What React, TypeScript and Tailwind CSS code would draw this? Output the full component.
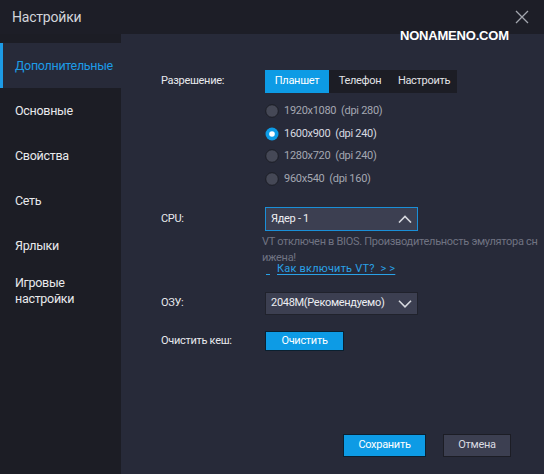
import { useState } from 'react';

const navItems = ['Дополнительные', 'Основные', 'Свойства', 'Сеть', 'Ярлыки', 'Игровые\nнастройки'];

const resolutions = [
  { res: '1920x1080', dpi: '(dpi 280)' },
  { res: '1600x900', dpi: '(dpi 240)' },
  { res: '1280x720', dpi: '(dpi 240)' },
  { res: '960x540', dpi: '(dpi 160)' },
];

const tabs = ['Планшет', 'Телефон', 'Настроить'];

function Chevron({ up }: { up?: boolean }) {
  return (
    <svg width="14" height="8" viewBox="0 0 14 8" fill="none" stroke="#d6d8de" strokeWidth="1.6">
      {up ? <path d="M1 7.5 L7 1.5 L13 7.5" /> : <path d="M1 0.8 L7 6.8 L13 0.8" />}
    </svg>
  );
}

function Radio({ on }: { on: boolean }) {
  return (
    <svg width="14" height="14" viewBox="0 0 14 14" className="shrink-0">
      {on ? (
        <>
          <circle cx="7" cy="7" r="6.5" fill="#0d9be5" />
          <circle cx="7" cy="7" r="2.8" fill="#ffffff" />
        </>
      ) : (
        <circle cx="7" cy="7" r="6.3" fill="#454856" stroke="#1b1d25" strokeWidth="1" />
      )}
    </svg>
  );
}

export default function App() {
  const [active, setActive] = useState(0);
  const [tab, setTab] = useState(0);
  const [res, setRes] = useState(1);

  return (
    <div
      className="relative w-[544px] h-[474px] flex flex-col bg-[#272a39] text-[#e8e9ed] overflow-hidden"
      style={{ fontFamily: 'Roboto, "Noto Sans", sans-serif' }}
    >
      {/* header */}
      <div className="h-[34px] shrink-0 flex items-center justify-between bg-[#1d1e27] pl-[12px] pr-[15px]">
        <span className="text-[14px] tracking-[-0.2px] text-[#d2d4da]">Настройки</span>
        <svg width="14" height="14" viewBox="0 0 14 14" stroke="#a3a6ae" strokeWidth="1.3">
          <path d="M1 1 L13 13 M13 1 L1 13" />
        </svg>
      </div>
      <div
        className="absolute left-[400px] top-[26px] text-[13px] font-bold text-white tracking-[-0.2px]"
        style={{ fontFamily: '"Liberation Sans", Arial, sans-serif' }}
      >
        NONAMENO.COM
      </div>

      <div className="flex flex-1 min-h-0">
        {/* sidebar */}
        <div className="w-[121px] shrink-0 bg-[#1c1d25] pt-[9px]">
          {navItems.map((n, i) => (
            <button
              key={n}
              onClick={() => setActive(i)}
              className={`w-full h-[45px] flex items-center text-left pl-[12px] text-[12.5px] tracking-[-0.3px] leading-[16px] whitespace-pre-line border-l-[3px] ${
                active === i ? 'bg-[#272a39] border-[#1d9be6] text-[#1d9be6]' : 'border-transparent text-[#e8e9ec]'
              }`}
            >
              {n}
            </button>
          ))}
        </div>

        {/* main */}
        <div className="flex-1 min-w-0 overflow-hidden flex flex-col pl-[40px] text-[11px] tracking-[-0.3px]">
          <div className="flex items-center mt-[36px]">
            <span className="w-[104px] shrink-0">Разрешение:</span>
            <div className="flex h-[23px] bg-[#1c1d25]">
              {tabs.map((t, i) => (
                <button
                  key={t}
                  onClick={() => setTab(i)}
                  className={`h-full flex items-center justify-center ${
                    i === 0 ? 'w-[64px]' : i === 1 ? 'w-[62px]' : 'w-[66px]'
                  } ${tab === i ? 'bg-[#0d9be5] text-white' : 'text-[#e2e3e7]'}`}
                >
                  {t}
                </button>
              ))}
            </div>
          </div>

          <div className="ml-[104px] mt-[7px] flex flex-col">
            {resolutions.map((r, i) => (
              <button key={r.res} onClick={() => setRes(i)} className="h-[22.5px] flex items-center gap-[5px] text-left">
                <Radio on={res === i} />
                <span className={res === i ? 'text-[#d8dae0]' : 'text-[#a4a7b1]'}>
                  {r.res}&nbsp;&nbsp;{r.dpi}
                </span>
              </button>
            ))}
          </div>

          <div className="flex items-center mt-[17px]">
            <span className="w-[104px] shrink-0">CPU:</span>
            <div className="w-[153px] h-[24px] flex items-center justify-between bg-[#3c3f51] border border-[#1a8fd8] pl-[5px] pr-[5px]">
              <span className="text-[#eceef2]">Ядер - 1</span>
              <Chevron up />
            </div>
          </div>
          <div className="ml-[101px] mt-[3px] leading-[16px] text-[#707382] whitespace-nowrap">
            <div>VT отключен в BIOS. Производительность эмулятора сн</div>
            <div>ижена!</div>
          </div>
          <div className="ml-[104px] mt-[-3px] leading-[12px] flex items-end">
            <span className="w-[4px] h-[1px] bg-[#2aa1e6] ml-[1px]" />
            <span className="ml-[3px] text-[#2aa1e6] underline underline-offset-2 pl-[4px] pr-[3px] tracking-[0.2px]">
              Как включить VT?&nbsp; &gt; &gt;
            </span>
          </div>

          <div className="flex items-center mt-[17px]">
            <span className="w-[104px] shrink-0">ОЗУ:</span>
            <div className="w-[153px] h-[23px] flex items-center justify-between bg-[#3c3f51] border border-[#20222c] pl-[5px] pr-[5px]">
              <span className="text-[#eceef2]">2048M(Рекомендуемо)</span>
              <Chevron />
            </div>
          </div>

          <div className="flex items-center mt-[16px]">
            <span className="w-[104px] shrink-0">Очистить кеш:</span>
            <button className="w-[79px] h-[20px] bg-[#0d9be5] border border-[#0a2030] text-white flex items-center justify-center">
              Очистить
            </button>
          </div>

          <div className="mt-auto mb-[17px] flex justify-end gap-[17px] pr-[33px]">
            <button className="w-[83px] h-[23px] bg-[#0d9be5] border border-[#0a2030] text-white flex items-center justify-center">
              Сохранить
            </button>
            <button className="w-[68px] h-[23px] bg-[#3c3f51] border border-[#1c1d25] text-[#dadce2] flex items-center justify-center">
              Отмена
            </button>
          </div>
        </div>
      </div>
    </div>
  );
}
